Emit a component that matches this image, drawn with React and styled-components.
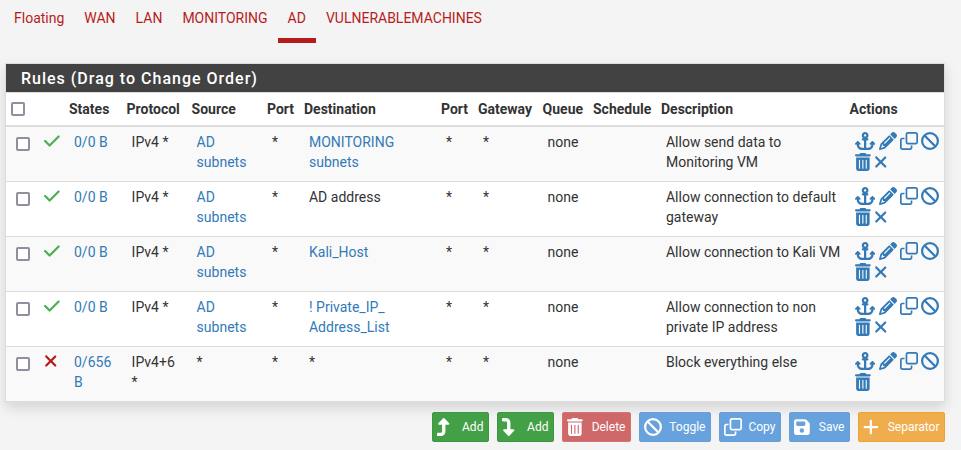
import React from "react";
import styled, { createGlobalStyle, css } from "styled-components";
import { FaPencil, FaRegClone, FaBan } from "react-icons/fa6";

const GlobalStyle = createGlobalStyle`
  * { box-sizing: border-box; }
  body {
    margin: 0;
    background: #f4f4f4;
    color: #333;
    font: 14px/20px Roboto, sans-serif;
    overflow: hidden;
  }
`;

const Page = styled.main`
  width: 961px;
  height: 450px;
  padding: 0 16px 0 5px;
`;

const Tabs = styled.nav`
  display: flex;
  height: 43px;
  margin: 0 0 20px -1px;
`;

const Tab = styled.a`
  padding: 8px 10px 0;
  color: #b71c1c;
  white-space: nowrap;
  border-bottom: 5px solid ${(p) => (p.$active ? "#b71c1c" : "transparent")};
`;

const Panel = styled.section`
  width: 940px;
  height: 339px;
  border: 1px solid #ddd;
  background: #fff;
  box-shadow: 0 6px 12px rgba(0, 0, 0, 0.13);
`;

const PanelTitle = styled.h2`
  height: 28px;
  margin: 0;
  padding: 0 15px;
  background: #424242;
  color: #fff;
  font-size: 16px;
  font-weight: 500;
  line-height: 29px;
  letter-spacing: 1px;
`;

const columns = css`
  display: grid;
  grid-template-columns: 28px 30px 57.6px 65px 75.4px 37px 137px 37px 64.6px 50.4px 68px 188.6px 99.4px;
`;

const HeaderRow = styled.div`
  ${columns}
  height: 35px;
  border-top: 1px solid #ddd;
  border-bottom: 2px solid #ddd;
  font-weight: 700;
  line-height: 33px;
`;

const HeaderCell = styled.div`
  padding-left: 5px;
  white-space: nowrap;
`;

const Row = styled.div`
  ${columns}
  height: 55px;
  padding-top: 5px;
  border-bottom: 1px solid #ddd;
  background: #fff;
  &:nth-child(even) { background: #f9f9f9; }
  &:last-child { height: 54px; border-bottom: 0; }
`;

const Cell = styled.div`
  padding-left: 10px;
  white-space: pre-line;
  color: ${(p) => (p.$link ? "#337ab7" : "inherit")};
`;

const Checkbox = styled.input`
  appearance: none;
  display: block;
  width: 14px;
  height: 14px;
  margin: ${(p) => (p.$header ? "9px 0 0 0" : "5px 0 0 0")};
  border: 2px solid #8f8f9d;
  border-radius: 2px;
  background: #fff;
`;

const Glyph = styled.svg`
  flex: none;
  display: block;
  width: ${(p) => p.$width}px;
  height: 18px;
  fill: currentColor;
  transform: ${(p) => (p.$flipped ? "scaleY(-1)" : "none")};
`;

const shapes = {
  anchor: [0, 576, "M352 176C369.7 176 384 190.3 384 208C384 225.7 369.7 240 352 240H320V448H368C421 448 464 405 464 352V345.9L456.1 352.1C447.6 362.3 432.4 362.3 423 352.1C413.7 343.6 413.7 328.4 423 319L479 263C488.4 253.7 503.6 253.7 512.1 263L568.1 319C578.3 328.4 578.3 343.6 568.1 352.1C559.6 362.3 544.4 362.3 535 352.1L528 345.9V352C528 440.4 456.4 512 368 512H208C119.6 512 48 440.4 48 352V345.9L40.97 352.1C31.6 362.3 16.4 362.3 7.029 352.1C-2.343 343.6-2.343 328.4 7.029 319L63.03 263C72.4 253.7 87.6 253.7 96.97 263L152.1 319C162.3 328.4 162.3 343.6 152.1 352.1C143.6 362.3 128.4 362.3 119 352.1L112 345.9V352C112 405 154.1 448 208 448H256V240H224C206.3 240 192 225.7 192 208C192 190.3 206.3 176 224 176H234.9C209 158.8 192 129.4 192 96C192 42.98 234.1 0 288 0C341 0 384 42.98 384 96C384 129.4 366.1 158.8 341.1 176H352zM288 128C305.7 128 320 113.7 320 96C320 78.33 305.7 64 288 64C270.3 64 256 78.33 256 96C256 113.7 270.3 128 288 128z"],
  xmark: [-32, 384, "M310.6 361.4c12.5 12.5 12.5 32.75 0 45.25C304.4 412.9 296.2 416 288 416s-16.38-3.125-22.62-9.375L160 301.3L54.63 406.6C48.38 412.9 40.19 416 32 416S15.63 412.9 9.375 406.6c-12.5-12.5-12.5-32.75 0-45.25l105.4-105.4L9.375 150.6c-12.5-12.5-12.5-32.75 0-45.25s32.75-12.5 45.25 0L160 210.8l105.4-105.4c12.5-12.5 32.75-12.5 45.25 0s12.5 32.75 0 45.25l-105.4 105.4L310.6 361.4z"],
  trash: [0, 448, "M135.2 17.7L128 32H32C14.3 32 0 46.3 0 64S14.3 96 32 96H416c17.7 0 32-14.3 32-32s-14.3-32-32-32H320l-7.2-14.3C307.4 6.8 296.3 0 284.2 0H163.8c-12.1 0-23.2 6.8-28.6 17.7zM416 128H32V448c0 35.3 28.7 64 64 64H352c35.3 0 64-28.7 64-64V128zM144 208V432c0 8.8-7.2 16-16 16s-16-7.2-16-16V208c0-8.8 7.2-16 16-16s16 7.2 16 16zm96 0V432c0 8.8-7.2 16-16 16s-16-7.2-16-16V208c0-8.8 7.2-16 16-16s16 7.2 16 16zm96 0V432c0 8.8-7.2 16-16 16s-16-7.2-16-16V208c0-8.8 7.2-16 16-16s16 7.2 16 16z"],
  check: [0, 448, "M438.6 105.4c12.5 12.5 12.5 32.8 0 45.3l-256 256c-12.5 12.5-32.8 12.5-45.3 0l-128-128c-12.5-12.5-12.5-32.8 0-45.3s32.8-12.5 45.3 0L160 338.7 393.4 105.4c12.5-12.5 32.8-12.5 45.3 0z"],
  turn: [0, 384, "M350 177.5c3.8-8.8 2-19-4.6-26l-136-144C204.9 2.7 198.6 0 192 0s-12.9 2.7-17.4 7.5l-136 144c-6.6 7-8.4 17.2-4.6 26s12.5 14.5 22 14.5h88l0 192c0 17.7-14.3 32-32 32H32c-17.7 0-32 14.3-32 32v32c0 17.7 14.3 32 32 32l80 0c70.7 0 128-57.3 128-128l0-192h88c9.6 0 18.2-5.7 22-14.5z"],
  save: [0, 448, "M64 32C28.7 32 0 60.7 0 96V416c0 35.3 28.7 64 64 64H384c35.3 0 64-28.7 64-64V173.3c0-17-6.7-33.3-18.7-45.3L352 50.7C340 38.7 323.7 32 306.7 32H64zm0 96c0-17.7 14.3-32 32-32H288c17.7 0 32 14.3 32 32v64c0 17.7-14.3 32-32 32H96c-17.7 0-32-14.3-32-32V128zM224 288a64 64 0 1 1 0 128 64 64 0 1 1 0-128z"],
  plus: [0, 448, "M256 80c0-17.7-14.3-32-32-32s-32 14.3-32 32V224H48c-17.7 0-32 14.3-32 32s14.3 32 32 32H192V432c0 17.7 14.3 32 32 32s32-14.3 32-32V288H400c17.7 0 32-14.3 32-32s-14.3-32-32-32H256V80z"],
};

const library = { pencil: FaPencil, clone: FaRegClone, ban: FaBan };

function Icon({ name, flipped }) {
  if (library[name]) return <Glyph as={library[name]} $width={18} />;
  const [left, width, path] = shapes[name];
  return (
    <Glyph viewBox={`${left} 0 ${width} 512`} $width={(width / 512) * 18} $flipped={flipped}>
      <path d={path} />
    </Glyph>
  );
}

const Status = styled.div`
  padding-left: 10px;
  color: ${(p) => (p.$blocked ? "#b71c1c" : "#4caf50")};
`;

const Actions = styled.div`
  display: flex;
  flex-direction: column;
  gap: 3px;
  padding-left: 10.4px;
  color: #337ab7;
`;

const ActionLine = styled.div`
  display: flex;
  gap: 3.3px;
`;

const Toolbar = styled.div`
  display: flex;
  justify-content: flex-end;
  gap: 8.33px;
  width: 940px;
  margin-top: 10px;
`;

const tones = {
  success: ["#43a047", "#3d9641"],
  danger: ["#cf6868", "#d57272"],
  info: ["#68a2de", "#6b9fd3"],
  warning: ["#f0ad4e", "#eea236"],
};

const Button = styled.button`
  display: flex;
  align-items: center;
  justify-content: space-between;
  width: ${(p) => p.$width}px;
  height: 30px;
  padding: 0 4.5px 0 4px;
  border: 1px solid ${(p) => tones[p.$tone][1]};
  border-radius: 2px;
  background: ${(p) => tones[p.$tone][0]};
  color: #fff;
  font: 12px/18px Roboto, sans-serif;
  white-space: nowrap;
`;

const tabs = ["Floating", "WAN", "LAN", "MONITORING", "AD", "VULNERABLEMACHINES"];
const headings = [
  "", "States", "Protocol", "Source", "Port", "Destination", "Port",
  "Gateway", "Queue", "Schedule", "Description", "Actions",
];
const rules = [
  { source: "AD\nsubnets", destination: "MONITORING\nsubnets", link: true, text: "Allow send data to\nMonitoring VM" },
  { source: "AD\nsubnets", destination: "AD address", text: "Allow connection to default\ngateway" },
  { source: "AD\nsubnets", destination: "Kali_Host", link: true, text: "Allow connection to Kali VM" },
  { source: "AD\nsubnets", destination: "! Private_IP_\nAddress_List", link: true, text: "Allow connection to non\nprivate IP address" },
  { source: "*", destination: "*", text: "Block everything else", blocked: true },
];
const buttons = [
  { label: "Add", icon: "turn", tone: "success", width: 56.7 },
  { label: "Add", icon: "turn", flipped: true, tone: "success", width: 56.7 },
  { label: "Delete", icon: "trash", tone: "danger", width: 68.7 },
  { label: "Toggle", icon: "ban", tone: "info", width: 71.7 },
  { label: "Copy", icon: "clone", tone: "info", width: 61.7 },
  { label: "Save", icon: "save", tone: "info", width: 60.7 },
  { label: "Separator", icon: "plus", tone: "warning", width: 86.7 },
];

function Rule({ rule }) {
  return (
    <Row>
      <Cell><Checkbox type="checkbox" /></Cell>
      <Status $blocked={rule.blocked}>
        <Icon name={rule.blocked ? "xmark" : "check"} />
      </Status>
      <Cell $link>{rule.blocked ? "0/656\nB" : "0/0 B"}</Cell>
      <Cell>{rule.blocked ? "IPv4+6\n*" : "IPv4 *"}</Cell>
      <Cell $link={!rule.blocked}>{rule.source}</Cell>
      <Cell>*</Cell>
      <Cell $link={rule.link}>{rule.destination}</Cell>
      <Cell>*</Cell>
      <Cell>*</Cell>
      <Cell>none</Cell>
      <Cell />
      <Cell>{rule.text}</Cell>
      <Actions>
        <ActionLine>
          <Icon name="anchor" />
          <Icon name="pencil" />
          <Icon name="clone" />
          <Icon name="ban" />
        </ActionLine>
        <ActionLine>
          <Icon name="trash" />
          {!rule.blocked && <Icon name="xmark" />}
        </ActionLine>
      </Actions>
    </Row>
  );
}

export default function App() {
  return (
    <>
      <GlobalStyle />
      <Page>
        <Tabs>
          {tabs.map((t) => <Tab key={t} $active={t === "AD"}>{t}</Tab>)}
        </Tabs>
        <Panel>
          <PanelTitle>Rules (Drag to Change Order)</PanelTitle>
          <div>
            <HeaderRow>
              <HeaderCell><Checkbox type="checkbox" $header /></HeaderCell>
              {headings.map((h, i) => <HeaderCell key={i}>{h}</HeaderCell>)}
            </HeaderRow>
            {rules.map((r) => <Rule key={r.text} rule={r} />)}
          </div>
        </Panel>
        <Toolbar>
          {buttons.map(({ label, icon, flipped, tone, width }, i) => (
            <Button key={i} $tone={tone} $width={width}>
              <Icon name={icon} flipped={flipped} />
              {label}
            </Button>
          ))}
        </Toolbar>
      </Page>
    </>
  );
}
